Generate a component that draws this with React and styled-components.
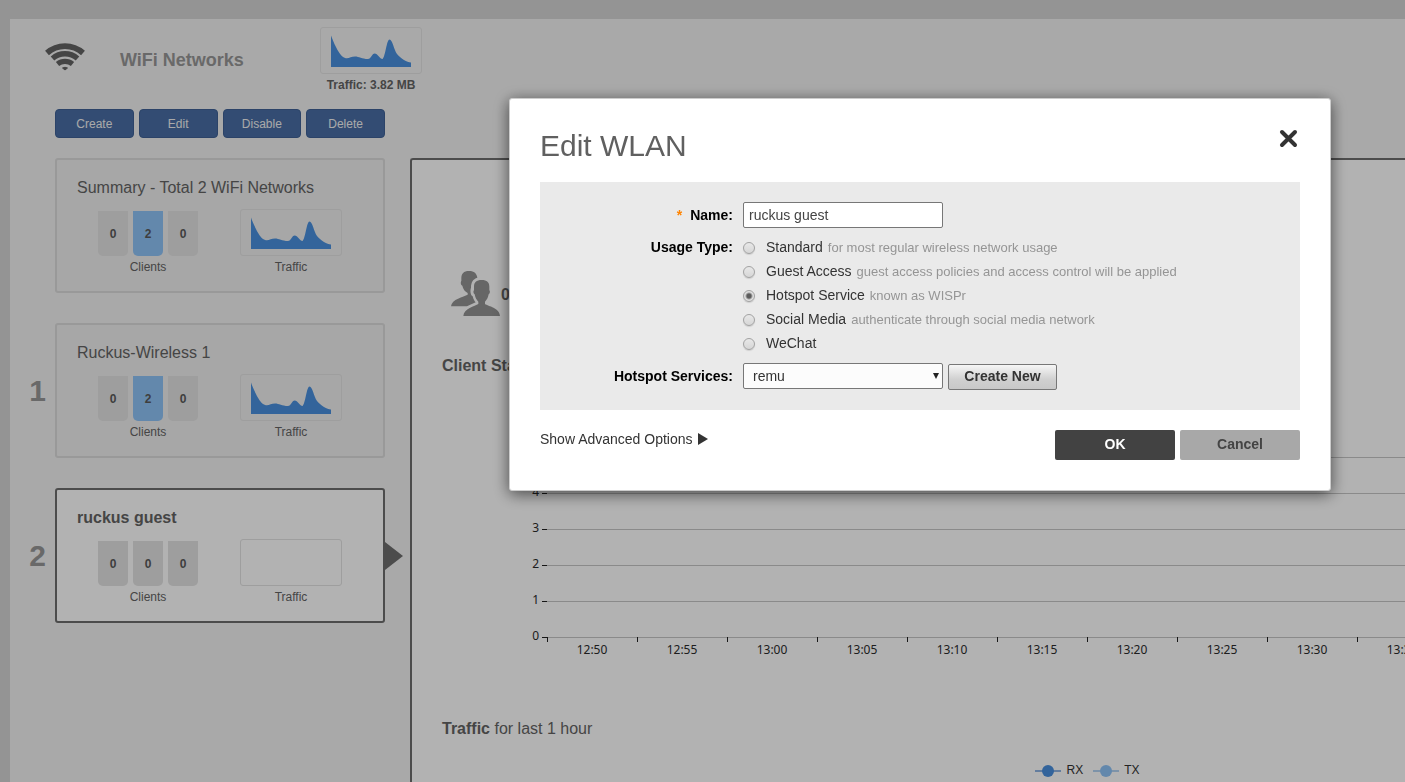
import React from "react";
import styled, { createGlobalStyle } from "styled-components";

const GlobalStyle = createGlobalStyle`
  *, *::before, *::after { box-sizing: border-box; }
  body {
    margin: 0;
    background: #d4d4d4;
    color: #646464;
    font-family: "Liberation Sans", Arial, sans-serif;
    font-size: 12px;
  }
  button, input, select { font-family: inherit; margin: 0; }
`;

/* ---------- page ---------- */

const Shell = styled.div`
  display: flex;
  height: 100vh;
  padding: 19px 0 0 10px;
  overflow: hidden;
`;

const Workspace = styled.main`
  display: flex;
  flex-direction: column;
  flex: 1;
  min-width: 0;
  background: #f3f3f3;
`;

const Header = styled.header`
  display: flex;
  align-items: flex-start;
  height: 90px;
  padding: 8px 35px 0;
`;

const HeaderIcon = styled.svg`
  width: 40px;
  height: 29px;
  margin-top: 15px;
`;

const PageTitle = styled.h1`
  width: 200px;
  margin: 22px 0 0 35px;
  font-size: 18px;
  line-height: 22px;
  color: #979797;
`;

const Metric = styled.div`
  display: flex;
  flex-direction: column;
  align-items: center;
  line-height: 22px;
  font-weight: ${(p) => (p.$strong ? "bold" : "normal")};
`;

const SparkBox = styled.svg`
  width: 102px;
  height: 47px;
  border: 1px solid #e2e2e2;
  border-radius: 3px;
`;

const Columns = styled.div`
  display: flex;
  flex: 1;
  min-height: 0;
`;

const Sidebar = styled.section`
  flex: none;
  width: 400px;
`;

const ActionBar = styled.div`
  display: flex;
  gap: 5px;
  height: 29px;
  margin: 0 25px 20px 45px;
`;

const ActionButton = styled.button`
  flex: 1;
  padding: 0;
  border: 1px solid #3f6196;
  border-radius: 4px;
  background: #496ea5;
  color: #f3f3f3;
  font-size: 12px;
`;

const NetworkRow = styled.div`
  display: grid;
  grid-template-columns: 45px 330px 25px;
  align-items: center;
  margin-bottom: 30px;
`;

const RowNumber = styled.span`
  padding-right: 9px;
  text-align: right;
  font-size: 30px;
  font-weight: bold;
  color: #979797;
`;

const Card = styled.article`
  height: 135px;
  padding: 18px 20px 0;
  border: 2px solid ${(p) => (p.$active ? "#6e6e6e" : "#dbdbdb")};
  border-radius: 3px;
  background: ${(p) => (p.$active ? "#fff" : "#efefef")};
`;

const CardTitle = styled.h2`
  margin: 0 0 11px;
  font-size: 16px;
  line-height: 20px;
  font-weight: ${(p) => (p.$active ? "bold" : "normal")};
`;

const CardMetrics = styled.div`
  display: flex;
  justify-content: space-between;
  padding: 0 21px;
`;

const Tiles = styled.div`
  display: flex;
  gap: 5px;
  padding-top: 2px;
`;

const Tile = styled.span`
  width: 30px;
  height: 45px;
  border-radius: 0 0 5px 5px;
  background: ${(p) => (p.$lit ? "#8fc3f7" : "#e2e2e2")};
  text-align: center;
  line-height: 46px;
  font-weight: bold;
  color: #5a5a5a;
`;

const Pointer = styled.svg`
  width: 18px;
  height: 30px;
`;

/* ---------- detail panel ---------- */

const Detail = styled.section`
  flex: 1;
  min-width: 0;
  margin-top: 49px;
  padding: 111px 0 0 30px;
  border: 2px solid #6e6e6e;
  border-right: 0;
  border-bottom: 0;
  border-radius: 3px 0 0 0;
  background: #fff;
  overflow: hidden;
`;

const DetailBody = styled.div`
  min-width: 1291px;
`;

const UserCount = styled.div`
  display: flex;
  align-items: flex-start;
  height: 46px;
  padding-left: 9px;
  font-size: 16px;
  line-height: 47px;
  font-weight: bold;
`;

const UsersIcon = styled.svg`
  width: 50px;
  height: 45px;
`;

const SectionTitle = styled.h3`
  margin: 0;
  padding-top: ${(p) => p.$gap}px;
  font-size: 16px;
  line-height: 20px;
  font-weight: normal;
`;

const Chart = styled.svg`
  display: block;
  width: 1291px;
  height: 300px;
  font-family: "Noto Sans", "Open Sans", sans-serif;
  font-size: 12px;
  fill: #2c2c2c;
`;

const Legend = styled.div`
  display: flex;
  justify-content: center;
  gap: 10px;
  margin-top: 21px;
  line-height: 20px;
  color: #333;
`;

const LegendItem = styled.span`
  display: flex;
  align-items: center;
  gap: 5px;
`;

/* ---------- dialog ---------- */

const Overlay = styled.div`
  position: fixed;
  inset: 0;
  display: flex;
  align-items: flex-start;
  justify-content: flex-end;
  padding: 98px 74px 0 20px;
  background: rgba(0, 0, 0, 0.3);
`;

const Dialog = styled.form`
  width: 822px;
  padding: 30px;
  border: 1px solid #ccc;
  border-radius: 3px;
  background: #fff;
  box-shadow: 0 3px 16px rgba(0, 0, 0, 0.6);
  font-size: 14px;
  color: #333;
`;

const DialogHead = styled.div`
  display: flex;
  justify-content: space-between;
  align-items: flex-start;
  margin-bottom: 20px;
`;

const DialogTitle = styled.h2`
  margin: 0;
  font-size: 30px;
  line-height: 33px;
  font-weight: normal;
  color: #606060;
`;

const CloseButton = styled.button`
  display: flex;
  padding: 0 2px;
  border: 0;
  background: none;
`;

const FormBody = styled.div`
  display: grid;
  grid-template-columns: 193px 1fr;
  column-gap: 10px;
  row-gap: 7px;
  padding: 20px 0;
  background: #eaeaea;
`;

const FieldLabel = styled.label`
  text-align: right;
  line-height: ${(p) => p.$line || 26}px;
  font-weight: bold;
  color: #000;
`;

const Required = styled.span`
  margin-right: 8px;
  color: #ff8400;
`;

const TextInput = styled.input`
  display: block;
  width: 200px;
  height: 26px;
  padding: 0 5px;
  border: 1px solid #777;
  border-radius: 2px;
  background: #fff;
  font-size: 14px;
  color: #444;
`;

const OptionList = styled.div`
  padding-bottom: 1px;
`;

const Option = styled.label`
  display: flex;
  align-items: center;
  height: 24px;
`;

const Radio = styled.input`
  appearance: none;
  width: 12px;
  height: 12px;
  margin: 2px 11px 0 0;
  border: 1px solid #a2a2a2;
  border-radius: 50%;
  background: linear-gradient(#e8e8e8, #d6d6d6);
  box-shadow: 0 1px 1px rgba(0, 0, 0, 0.12);

  &:checked {
    background: radial-gradient(circle, #5c5c5c 2px, #e0e0e0 4px);
  }
`;

const Hint = styled.span`
  margin-left: 5px;
  font-size: 13px;
  color: #959595;
`;

const SelectRow = styled.div`
  display: flex;
  gap: 5px;
`;

const SelectWrap = styled.div`
  position: relative;
`;

const Select = styled.select`
  appearance: none;
  display: block;
  width: 200px;
  height: 26px;
  padding: 0 20px 0 9px;
  border: 1px solid #777;
  border-radius: 2px;
  background: #fcfcfc;
  font-size: 14px;
  color: #333;
`;

const SelectArrow = styled.svg`
  position: absolute;
  top: 10px;
  right: 4px;
  width: 6px;
  height: 6px;
  pointer-events: none;
`;

const SmallButton = styled.button`
  width: 109px;
  height: 26px;
  margin-top: 1px;
  padding: 0 0 2px;
  border: 1px solid #777;
  border-radius: 2px;
  background: linear-gradient(#f6f6f6, #d0d0d0 60%, #c8c8c8);
  font-size: 14px;
  font-weight: bold;
  color: #333;
`;

const DialogFoot = styled.div`
  display: flex;
  gap: 5px;
  margin-top: 20px;
`;

const AdvancedLink = styled.a`
  display: flex;
  align-items: center;
  gap: 5px;
  height: 18px;
  margin-right: auto;
  color: #333;
  text-decoration: none;
`;

const FootButton = styled.button`
  width: 120px;
  height: 30px;
  padding: 0 0 2px;
  border: 0;
  border-radius: 2px;
  background: ${(p) => (p.$primary ? "#424242" : "#a8a8a8")};
  color: ${(p) => (p.$primary ? "#fff" : "#444")};
  font-size: 14px;
  font-weight: bold;
`;

/* ---------- data ---------- */

const networks = [
  { title: "Summary - Total 2 WiFi Networks", clients: [0, 2, 0], traffic: true },
  { number: 1, title: "Ruckus-Wireless 1", clients: [0, 2, 0], traffic: true },
  { number: 2, title: "ruckus guest", clients: [0, 0, 0], active: true },
];

const usageTypes = [
  ["Standard", "for most regular wireless network usage"],
  ["Guest Access", "guest access policies and access control will be applied"],
  ["Hotspot Service", "known as WISPr"],
  ["Social Media", "authenticate through social media network"],
  ["WeChat"],
];

const times = ["12:50", "12:55", "13:00", "13:05", "13:10", "13:15", "13:20", "13:25", "13:30", "13:35"];

/* ---------- parts ---------- */

function Spark({ filled }) {
  return (
    <SparkBox viewBox="1 1 100 45">
      {filled && (
        <path
          d="M11 8.500C13 14 18 26 23 30C28 33 30 29.500 35 29.500C39 29.500 42 32 48 32C51 32 52 26.500 54.700 26.500C57.500 26.500 60 32 62.500 32C65.500 30 66.500 12.500 69.500 12.500C72.500 12.500 74 23 77 27C81 32 87 35 91 35.500V40H11Z"
          fill="#4a90de"
        />
      )}
    </SparkBox>
  );
}

function NetworkCard({ network }) {
  return (
    <NetworkRow>
      <RowNumber>{network.number}</RowNumber>
      <Card $active={network.active}>
        <CardTitle $active={network.active}>{network.title}</CardTitle>
        <CardMetrics>
          <Metric>
            <Tiles>
              {network.clients.map((count, i) => (
                <Tile key={i} $lit={count > 0}>{count}</Tile>
              ))}
            </Tiles>
            Clients
          </Metric>
          <Metric>
            <Spark filled={network.traffic} />
            Traffic
          </Metric>
        </CardMetrics>
      </Card>
      {network.active && (
        <Pointer viewBox="0 0 18 30">
          <path d="M0 1L18 15L0 29Z" fill="#6e6e6e" />
        </Pointer>
      )}
    </NetworkRow>
  );
}

function ClientChart() {
  return (
    <Chart viewBox="0 0 1291 300">
      {[5, 4, 3, 2, 1, 0].map((value, i) => {
        const y = 81 + i * 36;
        return (
          <g key={value}>
            <rect x="105" y={y} width="1186" height="1" fill="#c6c6c6" />
            <rect x="100" y={y} width="5" height="1" fill="#222" />
            <text x="97" y={y + 3} textAnchor="end">{value}</text>
          </g>
        );
      })}
      {times.map((time, i) => (
        <g key={time}>
          <rect x={105 + i * 90} y="261" width="1" height="5" fill="#222" />
          <text x={150 + i * 90} y="278" textAnchor="middle">{time}</text>
        </g>
      ))}
    </Chart>
  );
}

function LegendMark({ color, line }) {
  return (
    <svg width="26" height="14" viewBox="0 0 26 14">
      <path d="M0 8H26" stroke={line} strokeWidth="2" />
      <circle cx="13" cy="8" r="6" fill={color} />
    </svg>
  );
}

export default function App() {
  return (
    <>
      <GlobalStyle />
      <Shell>
        <Workspace>
          <Header>
            <HeaderIcon viewBox="0 0 40 29" fill="none" stroke="#646464">
              <path d="M2 11A27 27 0 0 1 38 11" strokeWidth="5.800" />
              <path d="M7.500 16.500A19 19 0 0 1 32.500 16.500" strokeWidth="5.400" />
              <path d="M12.500 22A12 12 0 0 1 27.500 22" strokeWidth="5.200" />
              <path d="M17.500 26Q20 24.500 22.500 26L20 28Z" fill="#646464" strokeWidth="1" strokeLinejoin="round" />
            </HeaderIcon>
            <PageTitle>WiFi Networks</PageTitle>
            <Metric $strong>
              <Spark filled />
              Traffic: 3.82 MB
            </Metric>
          </Header>
          <Columns>
            <Sidebar>
              <ActionBar>
                {["Create", "Edit", "Disable", "Delete"].map((label) => (
                  <ActionButton key={label} type="button">{label}</ActionButton>
                ))}
              </ActionBar>
              {networks.map((network) => (
                <NetworkCard key={network.title} network={network} />
              ))}
            </Sidebar>
            <Detail>
              <DetailBody>
                <UserCount>
                  <UsersIcon viewBox="0 0 150 135" fill="#929292">
                    <path d="M54 0C70 0 77 8 79 20C66 24 60 34 60 50C57 58 58 72 65 76C67 84 70 90 74 94C66 99 56 101 48 106H0C2 84 38 78 50 71V66C42 62 36 54 34 44C28 42 29 32 31 30V22C31 8 38 0 54 0Z" />
                    <path d="M92 27C108 27 115 34 115 47V58C118 60 117 68 113 70C111 80 108 86 102 92V99C112 106 146 110 147 135H37C38 112 72 106 82 99V92C76 86 73 80 71 70C67 68 66 60 69 58V47C69 34 76 27 92 27Z" />
                  </UsersIcon>
                  0
                </UserCount>
                <SectionTitle $gap={39}><b>Client Stats</b> for last 1 hour</SectionTitle>
                <ClientChart />
                <SectionTitle $gap={43}><b>Traffic</b> for last 1 hour</SectionTitle>
                <Legend>
                  <LegendItem><LegendMark color="#4a90de" line="#8fb4e2" />RX</LegendItem>
                  <LegendItem><LegendMark color="#8fc3f7" line="#b3d3f2" />TX</LegendItem>
                </Legend>
              </DetailBody>
            </Detail>
          </Columns>
        </Workspace>
      </Shell>

      <Overlay>
        <Dialog role="dialog" aria-labelledby="dialog-title" onSubmit={(e) => e.preventDefault()}>
          <DialogHead>
            <DialogTitle id="dialog-title">Edit WLAN</DialogTitle>
            <CloseButton type="button" aria-label="Close">
              <svg width="19" height="19" viewBox="0 0 19 19" stroke="#333" strokeWidth="4" strokeLinecap="round">
                <path d="M3 3L16 16M16 3L3 16" />
              </svg>
            </CloseButton>
          </DialogHead>

          <FormBody>
            <FieldLabel htmlFor="wlan-name"><Required>*</Required>Name:</FieldLabel>
            <div>
              <TextInput id="wlan-name" type="text" defaultValue="ruckus guest" />
            </div>

            <FieldLabel as="span" id="usage-label" $line={24}>Usage Type:</FieldLabel>
            <OptionList role="radiogroup" aria-labelledby="usage-label">
              {usageTypes.map(([name, hint]) => (
                <Option key={name}>
                  <Radio type="radio" name="usage" value={name} defaultChecked={name === "Hotspot Service"} />
                  {name}
                  {hint && <Hint>{hint}</Hint>}
                </Option>
              ))}
            </OptionList>

            <FieldLabel htmlFor="hotspot">Hotspot Services:</FieldLabel>
            <SelectRow>
              <SelectWrap>
                <Select id="hotspot" defaultValue="remu">
                  <option value="remu">remu</option>
                </Select>
                <SelectArrow viewBox="0 0 6 6"><path d="M0 0H6L3 6Z" fill="#222" /></SelectArrow>
              </SelectWrap>
              <SmallButton type="button">Create New</SmallButton>
            </SelectRow>
          </FormBody>

          <DialogFoot>
            <AdvancedLink href="#advanced">
              Show Advanced Options
              <svg width="10" height="12" viewBox="0 0 10 12"><path d="M0 0L10 6L0 12Z" fill="#333" /></svg>
            </AdvancedLink>
            <FootButton type="submit" $primary>OK</FootButton>
            <FootButton type="button">Cancel</FootButton>
          </DialogFoot>
        </Dialog>
      </Overlay>
    </>
  );
}
